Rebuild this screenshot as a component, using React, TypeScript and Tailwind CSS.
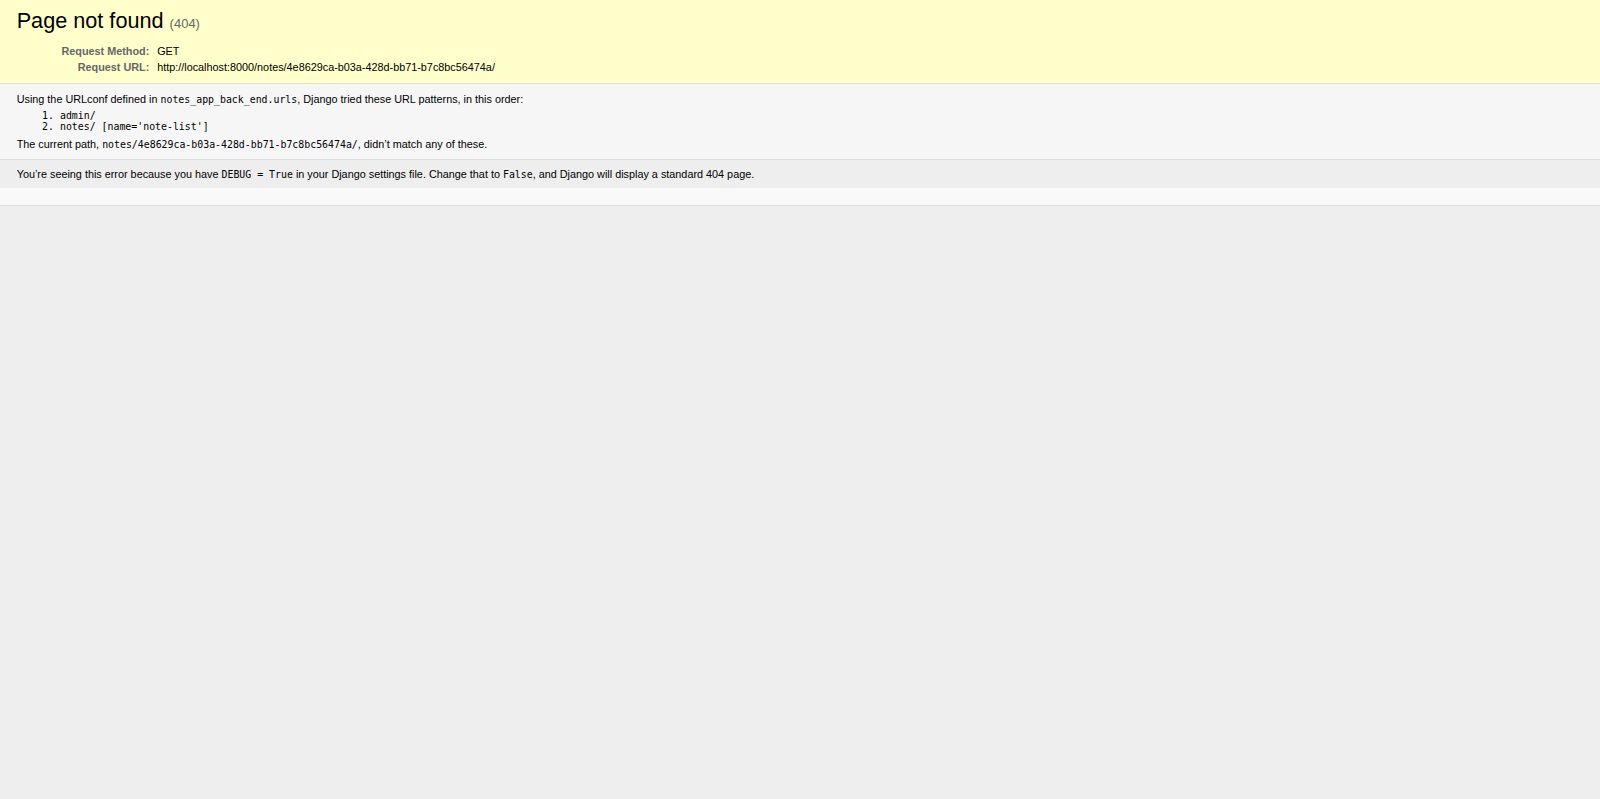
const sans = "font-['Liberation_Sans',Arial,sans-serif]";
const mono = "font-['DejaVu_Sans_Mono',monospace] text-[9.9px]";

function Code({ children }: { children: React.ReactNode }) {
  return <code className={mono}>{children}</code>;
}

const requestRows = [
  { label: "Request Method:", value: "GET" },
  { label: "Request URL:", value: "http://localhost:8000/notes/4e8629ca-b03a-428d-bb71-b7c8bc56474a/" },
];

export default function App() {
  return (
    <div className={`min-h-screen bg-[#eeeeee] text-black text-[10.83px] leading-[normal] ${sans}`}>
      <header className="border-b border-[#dddddd] bg-[#ffffcc] px-[16.67px] py-[8.33px]">
        <h1 className="mb-[8.67px] text-[21.67px] font-normal leading-[normal]">
          Page not found <span className="text-[13px] font-normal text-[#666666]">(404)</span>
        </h1>
        <table className="w-full border-collapse">
          <tbody>
            {requestRows.map((row) => (
              <tr key={row.label}>
                <th className="w-[138px] py-[2px] pl-[2.5px] pr-[5.4px] text-right align-top font-bold text-[#666666]">
                  {row.label}
                </th>
                <td className="px-[2.5px] py-[2px] align-top">{row.value}</td>
              </tr>
            ))}
          </tbody>
        </table>
      </header>

      <main className="border-b border-[#dddddd] bg-[#f6f6f6] px-[16.67px] py-[8.5px]">
        <p>
          Using the URLconf defined in <Code>notes_app_back_end.urls</Code>, Django tried these URL patterns, in this
          order:
        </p>
        <ol className="mx-[43.3px] my-[5.6px] list-decimal">
          <li className={mono}>
            <Code>admin/</Code>
          </li>
          <li className={mono}>
            <Code>notes/</Code> [name='note-list']
          </li>
        </ol>
        <p>
          The current path, <Code>notes/4e8629ca-b03a-428d-bb71-b7c8bc56474a/</Code>, didn’t match any of these.
        </p>
      </main>

      <footer className="bg-[#eeeeee] px-[16.67px] py-[8.33px]">
        <p>
          You’re seeing this error because you have <Code>DEBUG = True</Code> in your Django settings file. Change
          that to <Code>False</Code>, and Django will display a standard 404 page.
        </p>
      </footer>
      <div className="h-[18px] border-b border-[#dddddd] bg-[#f9f9f9]" />
    </div>
  );
}
